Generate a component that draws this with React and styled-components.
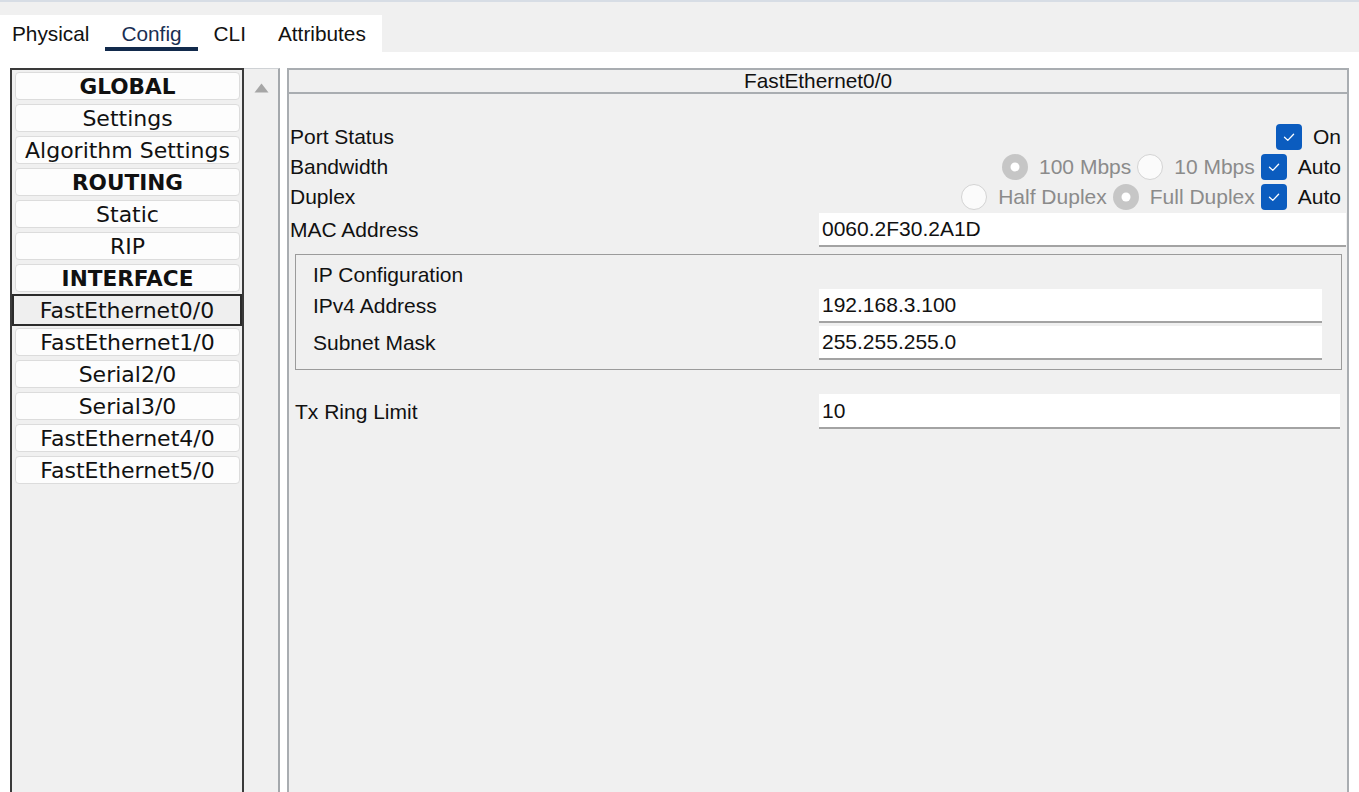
import styled, { createGlobalStyle } from 'styled-components';

const GlobalStyle = createGlobalStyle`
	html,
	body {
		margin: 0;
		padding: 0;
		background: #fff;
		overflow: hidden;
	}

	body {
		font-family: 'Liberation Sans', Arial, sans-serif;
		color: #111;
	}
`;

const Window = styled.div`
	display: flex;
	flex-direction: column;
	height: calc(100vh + 6px);
`;

const TopRule = styled.div`
	height: 2px;
	background-color: #d7dde5;
`;

const TabBar = styled.div`
	height: 50px;
	padding-top: 13px;
	box-sizing: border-box;
	background-color: #f0f0f0;
`;

const TabList = styled.div`
	display: flex;
	width: 382px;
	height: 37px;
	background-color: #fff;
`;

const Tab = styled.div`
	height: 36px;
	margin-bottom: 1px;
	padding: 6px 16px 0;
	box-sizing: border-box;
	line-height: 26px;
	font-size: 20.8px;
	color: ${({ $active }) => ($active ? '#1a2f52' : '#111')};
	border-bottom: 4px solid ${({ $active }) => ($active ? '#122a4c' : 'transparent')};
	cursor: pointer;

	&:first-child {
		padding-left: 12px;
	}
`;

const Main = styled.div`
	flex: 1;
	display: flex;
	padding: 16px 10px 0;
	min-height: 0;
`;

const Sidebar = styled.div`
	display: flex;
	margin-right: 7px;
`;

const ListPanel = styled.div`
	width: 234px;
	padding: 2px 2px 0 3px;
	box-sizing: border-box;
	display: flex;
	flex-direction: column;
	gap: 4px;
	background-color: #f0f0f0;
	border: 2px solid #3a3a3a;
`;

const ListItem = styled.div`
	height: 28px;
	box-sizing: border-box;
	display: flex;
	align-items: center;
	justify-content: center;
	font-family: 'DejaVu Sans', Verdana, sans-serif;
	font-size: ${({ $heading }) => ($heading ? '21.6px' : '22px')};
	font-weight: ${({ $heading }) => ($heading ? 700 : 400)};
	color: #111;
	background-color: #fdfdfd;
	border: 1px solid #dcdcdc;
	border-radius: 4px;
	white-space: nowrap;

	&.selected {
		height: 32px;
		margin: -2px -2px -2px -3px;
		background-color: #efefef;
		border: 2px solid #2b2b2b;
		border-radius: 0;
	}
`;

const ScrollTrack = styled.div`
	width: 36px;
	padding-top: 14px;
	box-sizing: border-box;
	display: flex;
	justify-content: center;
	align-items: flex-start;
	background-color: #f0f0f0;
	border-top: 1px solid #cfd2d5;
	border-right: 2px solid #a4a8ac;
`;

const DetailPanel = styled.div`
	flex: 1;
	display: flex;
	flex-direction: column;
	background-color: #f0f0f0;
	border: 2px solid #a9adb1;
`;

const PanelHeader = styled.div`
	height: 24px;
	box-sizing: border-box;
	line-height: 22px;
	text-align: center;
	font-size: 20.8px;
	border-bottom: 2px solid #a9adb1;
`;

const PanelBody = styled.div`
	padding: 28px 0 0 1px;
	display: flex;
	flex-direction: column;
`;

const OptionRow = styled.div`
	height: 30px;
	display: flex;
	align-items: center;
	justify-content: space-between;
	padding-right: 6px;
`;

const Label = styled.span`
	font-size: 21px;
	white-space: nowrap;
`;

const Options = styled.div`
	display: flex;
	align-items: center;
	gap: 6px;
`;

const Option = styled.label`
	display: flex;
	align-items: center;
	gap: 11px;
	font-size: 21px;
	color: ${({ $disabled }) => ($disabled ? '#8b8b8b' : '#111')};
	white-space: nowrap;

	svg {
		flex: none;
		display: block;
	}
`;

const FieldRow = styled.div`
	display: grid;
	grid-template-columns: ${({ $labelWidth }) => $labelWidth}px 1fr;
	align-items: center;
	height: ${({ $height }) => $height || 34}px;
	margin: ${({ $margin }) => $margin || '0'};
`;

const TextInput = styled.input`
	width: 100%;
	height: 100%;
	min-width: 0;
	box-sizing: border-box;
	padding: 0 3px;
	border: none;
	border-bottom: 2px solid #a3a3a3;
	background-color: #fff;
	font-family: 'Liberation Sans', Arial, sans-serif;
	font-size: 21px;
	color: #111;
	outline: none;
`;

const Group = styled.div`
	margin: 7px 5px 0;
	padding: 8px 19px 9px 17px;
	display: flex;
	flex-direction: column;
	gap: 3px;
	border: 1px solid #9b9b9b;
`;

const GroupTitle = styled.div`
	height: 23px;
	line-height: 24px;
	font-size: 21px;
`;

function Checkbox() {
	return (
		<svg width="26" height="26" viewBox="0 0 26 26">
			<rect x="0" y="0" width="26" height="26" rx="4" fill="#0b5cbf" />
			<path d="M8.5 13.2 L11.8 16.4 L17.6 10.2" fill="none" stroke="#fff" strokeWidth="1.3" strokeLinecap="round" strokeLinejoin="round" />
		</svg>
	);
}

function Radio({ checked }) {
	return (
		<svg width="26" height="26" viewBox="0 0 26 26">
			{checked ? (
				<>
					<circle cx="13" cy="13" r="13" fill="#c6c6c6" />
					<circle cx="13" cy="13" r="4.5" fill="#fff" />
				</>
			) : (
				<circle cx="13" cy="13" r="12.5" fill="#fbfbfb" stroke="#d3d3d3" />
			)}
		</svg>
	);
}

function UpArrow() {
	return (
		<svg width="15" height="10" viewBox="0 0 15 10">
			<path d="M7.5 0.5 L14.5 9.5 L0.5 9.5 Z" fill="#a6a6a6" />
		</svg>
	);
}

const TABS = ['Physical', 'Config', 'CLI', 'Attributes'];

const SIDEBAR_ITEMS = [
	{ id: 'global', label: 'GLOBAL', heading: true },
	{ id: 'settings', label: 'Settings' },
	{ id: 'algo', label: 'Algorithm Settings' },
	{ id: 'routing', label: 'ROUTING', heading: true },
	{ id: 'static', label: 'Static' },
	{ id: 'rip', label: 'RIP' },
	{ id: 'interface', label: 'INTERFACE', heading: true },
	{ id: 'fe0', label: 'FastEthernet0/0', selected: true },
	{ id: 'fe1', label: 'FastEthernet1/0' },
	{ id: 's2', label: 'Serial2/0' },
	{ id: 's3', label: 'Serial3/0' },
	{ id: 'fe4', label: 'FastEthernet4/0' },
	{ id: 'fe5', label: 'FastEthernet5/0' },
];

const OPTION_ROWS = [
	{
		id: 'status',
		label: 'Port Status',
		options: [{ type: 'check', text: 'On' }],
	},
	{
		id: 'bandwidth',
		label: 'Bandwidth',
		options: [
			{ type: 'radio', text: '100 Mbps', checked: true, disabled: true },
			{ type: 'radio', text: '10 Mbps', disabled: true },
			{ type: 'check', text: 'Auto' },
		],
	},
	{
		id: 'duplex',
		label: 'Duplex',
		options: [
			{ type: 'radio', text: 'Half Duplex', disabled: true },
			{ type: 'radio', text: 'Full Duplex', checked: true, disabled: true },
			{ type: 'check', text: 'Auto' },
		],
	},
];

export default function App() {
	return (
		<>
			<GlobalStyle />
			<Window>
				<TopRule />
				<TabBar>
					<TabList>
						{TABS.map((tab) => (
							<Tab key={tab} $active={tab === 'Config'}>
								{tab}
							</Tab>
						))}
					</TabList>
				</TabBar>
				<Main>
					<Sidebar>
						<ListPanel>
							{SIDEBAR_ITEMS.map(({ id, label, heading, selected }) => (
								<ListItem key={id} $heading={heading} className={selected ? 'selected' : ''}>
									{label}
								</ListItem>
							))}
						</ListPanel>
						<ScrollTrack>
							<UpArrow />
						</ScrollTrack>
					</Sidebar>
					<DetailPanel>
						<PanelHeader>FastEthernet0/0</PanelHeader>
						<PanelBody>
							{OPTION_ROWS.map(({ id, label, options }) => (
								<OptionRow key={id}>
									<Label>{label}</Label>
									<Options>
										{options.map((opt) => (
											<Option key={opt.text} $disabled={opt.disabled}>
												{opt.type === 'check' ? <Checkbox /> : <Radio checked={opt.checked} />}
												{opt.text}
											</Option>
										))}
									</Options>
								</OptionRow>
							))}
							<FieldRow $labelWidth={529} $margin="1px 1px 0 0">
								<Label>MAC Address</Label>
								<TextInput readOnly value="0060.2F30.2A1D" />
							</FieldRow>
							<Group>
								<GroupTitle>IP Configuration</GroupTitle>
								<FieldRow $labelWidth={506}>
									<Label>IPv4 Address</Label>
									<TextInput readOnly value="192.168.3.100" />
								</FieldRow>
								<FieldRow $labelWidth={506}>
									<Label>Subnet Mask</Label>
									<TextInput readOnly value="255.255.255.0" />
								</FieldRow>
							</Group>
							<FieldRow $labelWidth={524} $height={35} $margin="24px 7px 0 5px">
								<Label>Tx Ring Limit</Label>
								<TextInput readOnly value="10" />
							</FieldRow>
						</PanelBody>
					</DetailPanel>
				</Main>
			</Window>
		</>
	);
}
